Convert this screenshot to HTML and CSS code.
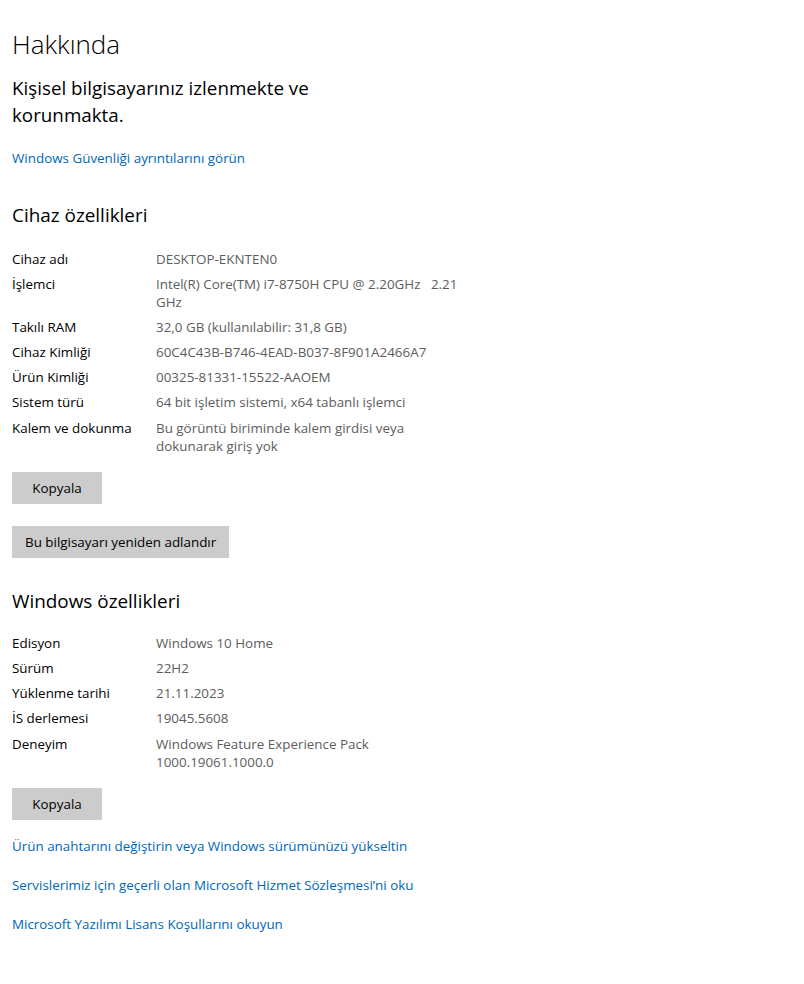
FILE: index.html
```html
<!DOCTYPE html>
<html lang="tr">

<head>
    <meta charset="UTF-8">
    <meta name="viewport" content="width=device-width, initial-scale=1.0">
    <title>Hakkında</title>
    <link rel="stylesheet" href="styles.css">
</head>

<body>
    <div class="about-page">
        <h1 class="page-title">Hakkında</h1>
        <p class="status">Kişisel bilgisayarınız izlenmekte ve korunmakta.</p>
        <a class="link first-link" href="#">Windows Güvenliği ayrıntılarını görün</a>

        <h2 class="section-title">Cihaz özellikleri</h2>
        <dl class="specs">
            <dt>Cihaz adı</dt>
            <dd>DESKTOP-EKNTEN0</dd>
            <dt>İşlemci</dt>
            <dd>Intel(R) Core(TM) i7-8750H CPU @ 2.20GHz &nbsp; 2.21 GHz</dd>
            <dt>Takılı RAM</dt>
            <dd>32,0 GB (kullanılabilir: 31,8 GB)</dd>
            <dt>Cihaz Kimliği</dt>
            <dd>60C4C43B-B746-4EAD-B037-8F901A2466A7</dd>
            <dt>Ürün Kimliği</dt>
            <dd>00325-81331-15522-AAOEM</dd>
            <dt>Sistem türü</dt>
            <dd>64 bit işletim sistemi, x64 tabanlı işlemci</dd>
            <dt>Kalem ve dokunma</dt>
            <dd>Bu görüntü biriminde kalem girdisi veya dokunarak giriş yok</dd>
        </dl>
        <button class="btn copy-btn">Kopyala</button>
        <button class="btn rename-btn">Bu bilgisayarı yeniden adlandır</button>

        <h2 class="section-title">Windows özellikleri</h2>
        <dl class="specs windows-specs">
            <dt>Edisyon</dt>
            <dd>Windows 10 Home</dd>
            <dt>Sürüm</dt>
            <dd>22H2</dd>
            <dt>Yüklenme tarihi</dt>
            <dd>21.11.2023</dd>
            <dt>İS derlemesi</dt>
            <dd>19045.5608</dd>
            <dt>Deneyim</dt>
            <dd>Windows Feature Experience Pack 1000.19061.1000.0</dd>
        </dl>
        <button class="btn copy-btn">Kopyala</button>

        <div class="links">
            <a class="link" href="#">Ürün anahtarını değiştirin veya Windows sürümünüzü yükseltin</a>
            <a class="link" href="#">Servislerimiz için geçerli olan Microsoft Hizmet Sözleşmesi’ni oku</a>
            <a class="link" href="#">Microsoft Yazılımı Lisans Koşullarını okuyun</a>
        </div>
    </div>
</body>

</html>
```

FILE: styles.css
```css
body {
    margin: 0;
    background: #fff;
    color: #000;
    font-family: "Segoe UI", "Open Sans", "Noto Sans", sans-serif;
    font-size: 13.4px;
}

.about-page {
    display: flex;
    flex-direction: column;
    align-items: flex-start;
    padding: 26px 12px 40px;
}

.page-title {
    margin: 0;
    font-size: 26px;
    font-weight: 300;
    line-height: 36px;
}

.status {
    margin: 13px 0 0;
    max-width: 330px;
    font-size: 18.8px;
    line-height: 27px;
}

.link {
    display: block;
    color: #0067b8;
    text-decoration: none;
    line-height: 20px;
}

.first-link {
    margin-top: 19px;
}

.section-title {
    margin: 33px 0 0;
    font-size: 18.9px;
    font-weight: 400;
    line-height: 28px;
}

.specs {
    display: grid;
    grid-template-columns: 144px 306px;
    row-gap: 7px;
    margin: 21px 0 0;
    line-height: 18px;
}

.windows-specs {
    margin-top: 19px;
}

.specs dt,
.specs dd {
    margin: 0;
}

.specs dd {
    color: #5d5d5d;
}

.specs dt:last-of-type,
.specs dd:last-of-type {
    margin-top: 1px;
}

.btn {
    margin-top: 17px;
    min-width: 90px;
    height: 32px;
    padding: 0 13px;
    border: none;
    background: #ccc;
    color: #000;
    font: inherit;
}

.rename-btn {
    margin-top: 22px;
}

.rename-btn + .section-title {
    margin-top: 29px;
}

.links {
    display: flex;
    flex-direction: column;
    gap: 19px;
    margin-top: 16px;
}
```
